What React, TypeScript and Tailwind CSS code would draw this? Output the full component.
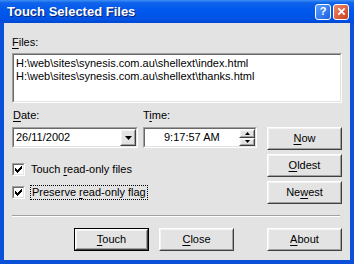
const font = "font-['Liberation_Sans',Arial,sans-serif]";

function Raised({ children, className = '' }: { children?: React.ReactNode; className?: string }) {
    return (
        <div className={`border border-t-white border-l-white border-b-[#404040] border-r-[#404040] bg-[#e3e3e3] ${className}`}>
            <div className="flex h-full w-full items-center justify-center border border-t-[#f4f4f4] border-l-[#f4f4f4] border-b-[#a0a0a0] border-r-[#a0a0a0]">
                {children}
            </div>
        </div>
    );
}

function Sunken({ children, className = '' }: { children?: React.ReactNode; className?: string }) {
    return (
        <div className={`border border-t-[#a0a0a0] border-l-[#a0a0a0] border-b-white border-r-white ${className}`}>
            <div className="h-full w-full border border-t-[#696969] border-l-[#696969] border-b-[#e3e3e3] border-r-[#e3e3e3] bg-white">
                {children}
            </div>
        </div>
    );
}

function Btn({ pre = '', u, post = '', isDefault = false }: { pre?: string; u: string; post?: string; isDefault?: boolean }) {
    const inner = (
        <Raised className="h-full w-full">
            <span className="text-[11px] leading-[13px] text-black">
                {pre}
                <span className="underline underline-offset-2">{u}</span>
                {post}
            </span>
        </Raised>
    );
    if (isDefault) {
        return <div className="h-[23px] w-[75px] border border-black">{inner}</div>;
    }
    return <div className="h-[23px] w-[75px]">{inner}</div>;
}

function CheckBox() {
    return (
        <Sunken className="h-[13px] w-[13px] shrink-0">
            <div className="flex h-full w-full items-center justify-center">
                <svg viewBox="0 0 7 7" className="h-[7px] w-[7px]" shapeRendering="crispEdges">
                    <path
                        d="M6 0h1v3h-1v1h-1v1h-1v1h-1v1h-1v-1h-1v-1h-1v-3h1v1h1v1h1v-1h1v-1h1v-1h1z"
                        fill="#000"
                    />
                </svg>
            </div>
        </Sunken>
    );
}

export default function App() {
    return (
        <div className={`h-[264px] w-[354px] overflow-hidden bg-[#0a50d8] ${font}`}>
            <div className="flex h-[23px] items-center bg-[linear-gradient(to_bottom,#3d8ff6_0%,#1063ea_12%,#0058ee_45%,#0054e6_80%,#0048d4_100%)] pl-[7px] pr-[5px]">
                <span className="text-[13px] font-bold leading-none text-white [text-shadow:1px_1px_0_#0a1e6e]">
                    Touch Selected Files
                </span>
                <div className="ml-auto flex gap-[2px]">
                    <div className="flex h-[16px] w-[16px] items-center justify-center rounded-[3px] border border-white bg-[linear-gradient(135deg,#5aa0ff,#1e5fe0)]">
                        <span className="text-[11px] font-bold leading-none text-white">?</span>
                    </div>
                    <div className="flex h-[16px] w-[16px] items-center justify-center rounded-[3px] border border-white bg-[linear-gradient(135deg,#ee8a6a,#c8401a)]">
                        <svg viewBox="0 0 10 10" className="h-[9px] w-[9px]">
                            <path d="M1.5 1.5 L8.5 8.5 M8.5 1.5 L1.5 8.5" stroke="#fff" strokeWidth="2" />
                        </svg>
                    </div>
                </div>
            </div>

            <div className="mx-[4px] h-[237px] bg-[#e3e3e3] px-[8px] pt-[13px] text-[11px] leading-[13px] text-black">
                <div className="h-[13px]">
                    <span className="underline underline-offset-2">F</span>iles:
                </div>
                <Sunken className="mt-[4px] h-[50px] w-[330px]">
                    <div className="px-[2px] pt-[2px] leading-[13px]">
                        <div>H:\web\sites\synesis.com.au\shellext\index.html</div>
                        <div>H:\web\sites\synesis.com.au\shellext\thanks.html</div>
                    </div>
                </Sunken>

                <div className="flex">
                    <div className="w-[250px] pt-[6px]">
                        <div className="flex h-[13px]">
                            <div className="w-[131px] pl-[1px]">
                                <span className="underline underline-offset-2">D</span>ate:
                            </div>
                            <div>
                                T<span className="underline underline-offset-2">i</span>me:
                            </div>
                        </div>
                        <div className="mt-[5px] flex gap-[5px]">
                            <Sunken className="h-[21px] w-[126px]">
                                <div className="flex h-full items-center">
                                    <span className="pl-[2px]">26/11/2002</span>
                                    <Raised className="ml-auto h-full w-[16px]">
                                        <svg viewBox="0 0 7 4" className="h-[4px] w-[7px]">
                                            <path d="M0 0 H7 L3.5 4 Z" fill="#000" />
                                        </svg>
                                    </Raised>
                                </div>
                            </Sunken>
                            <Sunken className="h-[21px] w-[114px]">
                                <div className="flex h-full items-center">
                                    <span className="pl-[19px]">9:17:57 AM</span>
                                    <div className="ml-auto flex h-full w-[16px] flex-col">
                                        <Raised className="h-1/2 w-full">
                                            <svg viewBox="0 0 5 3" className="h-[3px] w-[5px]">
                                                <path d="M0 3 H5 L2.5 0 Z" fill="#000" />
                                            </svg>
                                        </Raised>
                                        <Raised className="h-1/2 w-full">
                                            <svg viewBox="0 0 5 3" className="h-[3px] w-[5px]">
                                                <path d="M0 0 H5 L2.5 3 Z" fill="#000" />
                                            </svg>
                                        </Raised>
                                    </div>
                                </div>
                            </Sunken>
                        </div>
                        <div className="mt-[15px] flex h-[13px] items-center gap-[6px]">
                            <CheckBox />
                            <span>
                                Touch <span className="underline underline-offset-2">r</span>ead-only files
                            </span>
                        </div>
                        <div className="mt-[10px] flex h-[13px] items-center gap-[5px]">
                            <CheckBox />
                            <span className="border border-dotted border-black px-[1px]">
                                Preserve <span className="underline underline-offset-2">r</span>ead-only flag
                            </span>
                        </div>
                    </div>
                    <div className="ml-auto flex flex-col gap-[4px] pt-[24px]">
                        <Btn u="N" post="ow" />
                        <Btn u="O" post="ldest" />
                        <Btn pre="Ne" u="w" post="est" />
                    </div>
                </div>

                <div className="mt-[11px] h-[2px] w-[328px] border-t border-b border-t-[#a0a0a0] border-b-white" />

                <div className="mt-[11px] flex">
                    <div className="ml-[62px]">
                        <Btn u="T" post="ouch" isDefault />
                    </div>
                    <div className="ml-[10px]">
                        <Btn u="C" post="lose" />
                    </div>
                    <div className="ml-auto">
                        <Btn u="A" post="bout" />
                    </div>
                </div>
            </div>
            <div className="h-[4px]" />
        </div>
    );
}
